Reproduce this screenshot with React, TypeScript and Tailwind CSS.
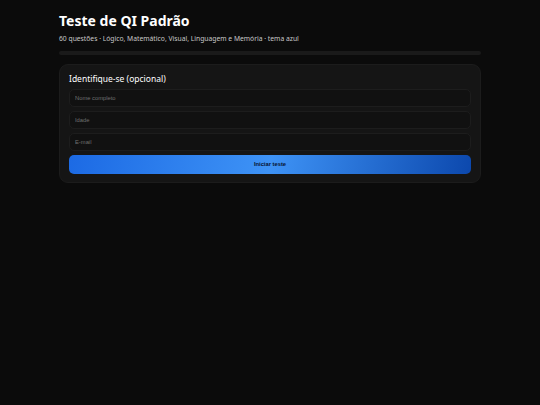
import React from "react";

const Field = ({ placeholder }: { placeholder: string }) => {
  return (
    <input
      placeholder={placeholder}
      className="w-full h-[18px] rounded-[5px] bg-[#111111] border border-[#1d1d1d] px-[5px] text-[5.8px] text-[#ddd] placeholder:text-[#707070] outline-none font-['Liberation_Sans',Arial,sans-serif]"
    />
  );
};

export default function App() {
  return (
    <div className="min-h-screen w-full bg-[#0b0b0b] font-['Noto_Sans',sans-serif]">
      <div className="w-[422px] mx-auto pt-[11px]">
        {/* Header */}
        <h1 className="text-[14px] font-bold text-white leading-[20px]">
          Teste de QI Padrão
        </h1>
        <p className="text-[6.75px] text-[#c8c8c8] mt-[3px] leading-[10px]">
          60 questões · Lógico, Matemático, Visual, Linguagem e Memória · tema azul
        </p>
        {/* Progress bar */}
        <div className="h-[4px] w-full rounded-full bg-[#1a1a1a] mt-[7px]" />

        {/* Card */}
        <div className="mt-[9px] rounded-[9px] bg-[#151515] border border-[#1c1c1c] px-[9px] pt-[8px] pb-[8px]">
          <h2 className="text-[8.5px] text-white leading-[12px]">
            Identifique-se (opcional)
          </h2>
          <div className="flex flex-col gap-[4px] mt-[4px]">
            <Field placeholder="Nome completo" />
            <Field placeholder="Idade" />
            <Field placeholder="E-mail" />
            <button className="h-[19px] w-full rounded-[5px] bg-[linear-gradient(100deg,#1c6ae4_0%,#3e93f6_50%,#0c48ad_100%)] text-[5.8px] font-bold text-[#071430] font-['Liberation_Sans',Arial,sans-serif]">
              Iniciar teste
            </button>
          </div>
        </div>
      </div>
    </div>
  );
}
